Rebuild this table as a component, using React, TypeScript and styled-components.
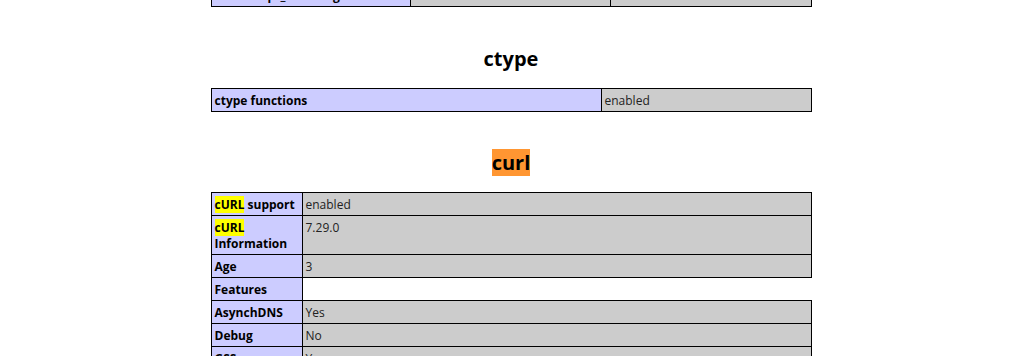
import styled, { createGlobalStyle } from 'styled-components'

const GlobalStyle = createGlobalStyle`
  body {
    margin: 0;
    background: #fff;
    color: #000;
    font-family: "Open Sans", "Liberation Sans", sans-serif;
  }
`

const Center = styled.div`
  width: 1022px;
  text-align: center;
  margin-top: -17px;
`

const InfoTable = styled.table`
  border-collapse: collapse;
  table-layout: fixed;
  width: 600px;
  margin: 0 auto;
  text-align: left;
`

const Col = styled.col<{ $w: number }>`
  width: ${p => p.$w}px;
`

const Cell = styled.td<{ $kind: 'e' | 'v' }>`
  border: 1px solid #000;
  font-size: 12px;
  line-height: 16px;
  padding: 4px 3px 2px;
  vertical-align: baseline;
  background: ${p => (p.$kind === 'e' ? '#ccccff' : '#cccccc')};
  font-weight: ${p => (p.$kind === 'e' ? 'bold' : 'normal')};
  color: ${p => (p.$kind === 'e' ? '#000' : '#222')};
`

const LineBreak = styled.div<{ $h: number }>`
  height: ${p => p.$h}px;
`

const Heading = styled.h2`
  font-size: 20px;
  line-height: 27px;
  font-weight: bold;
  margin: 17px 0 16px;
`

// browser find-in-page highlights
const Found = styled.span`
  background: #ff9632;
`

const Match = styled.span`
  background: #ffff00;
`

const curlFeatures: [string, string][] = [
  ['AsynchDNS', 'Yes'],
  ['Debug', 'No'],
  ['GSS-Negotiate', 'Yes'],
  ['IDN', 'Yes'],
  ['IPv6', 'Yes'],
]

export default function App() {
  return (
    <>
      <GlobalStyle />
      <Center>
        <InfoTable>
          <colgroup>
            <Col $w={199} />
            <Col $w={200} />
            <Col $w={201} />
          </colgroup>
          <tbody>
            <tr>
              <Cell $kind="e">zend.script_encoding</Cell>
              <Cell $kind="v">no value</Cell>
              <Cell $kind="v">no value</Cell>
            </tr>
          </tbody>
        </InfoTable>

        <LineBreak $h={21} />
        <Heading>ctype</Heading>
        <InfoTable>
          <colgroup>
            <Col $w={390} />
            <Col $w={210} />
          </colgroup>
          <tbody>
            <tr>
              <Cell $kind="e">ctype functions</Cell>
              <Cell $kind="v">enabled</Cell>
            </tr>
          </tbody>
        </InfoTable>

        <LineBreak $h={20} />
        <Heading>
          <Found>curl</Found>
        </Heading>
        <InfoTable>
          <colgroup>
            <Col $w={91} />
            <Col $w={509} />
          </colgroup>
          <tbody>
            <tr>
              <Cell $kind="e">
                <Match>cURL</Match> support
              </Cell>
              <Cell $kind="v">enabled</Cell>
            </tr>
            <tr>
              <Cell $kind="e">
                <Match>cURL</Match> Information
              </Cell>
              <Cell $kind="v">7.29.0</Cell>
            </tr>
            <tr>
              <Cell $kind="e">Age</Cell>
              <Cell $kind="v">3</Cell>
            </tr>
            <tr>
              <Cell $kind="e">Features</Cell>
            </tr>
            {curlFeatures.map(([name, value]) => (
              <tr key={name}>
                <Cell $kind="e">{name}</Cell>
                <Cell $kind="v">{value}</Cell>
              </tr>
            ))}
          </tbody>
        </InfoTable>
      </Center>
    </>
  )
}
